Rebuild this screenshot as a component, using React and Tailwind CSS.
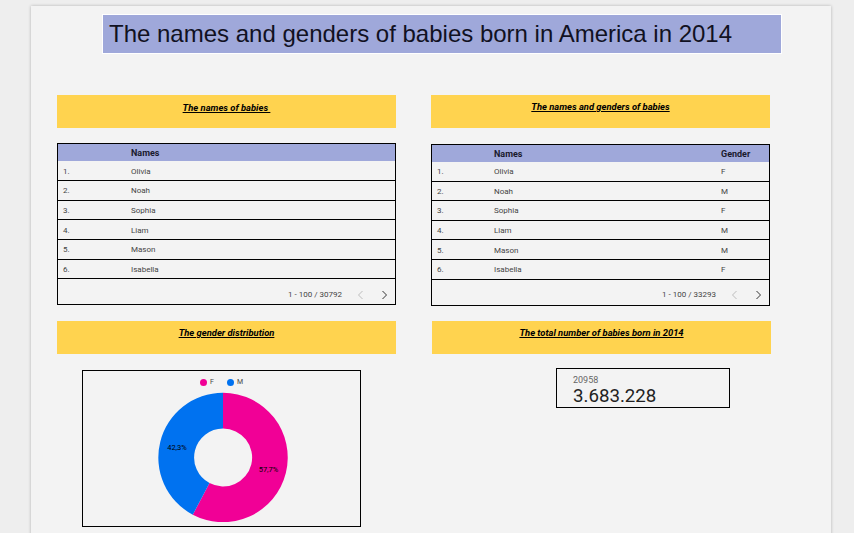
import React from 'react';

const names = [
  ['Olivia', 'F'],
  ['Noah', 'M'],
  ['Sophia', 'F'],
  ['Liam', 'M'],
  ['Mason', 'M'],
  ['Isabella', 'F'],
];

function SectionHeader({ title, className = '' }) {
  return (
    <div className={`h-[33px] w-[339px] bg-[#ffd34f] text-center font-['Roboto',sans-serif] text-[9.4px] font-bold italic leading-[11px] text-black ${className}`}>
      <span className="whitespace-pre underline">{title}</span>
    </div>
  );
}

function Pager({ label }) {
  return (
    <div className="flex flex-1 items-center justify-end pt-[6px] font-['Roboto',sans-serif] text-[8px] text-[#444]">
      <span>{label}</span>
      <svg className="ml-[15px]" width="7" height="10" viewBox="0 0 7 10" fill="none" stroke="#bdbdbd" strokeWidth="1">
        <path d="M5.5 1 L1.5 5 L5.5 9" />
      </svg>
      <svg className="ml-[17px] mr-[7px]" width="7" height="10" viewBox="0 0 7 10" fill="none" stroke="#333" strokeWidth="1">
        <path d="M1.5 1 L5.5 5 L1.5 9" />
      </svg>
    </div>
  );
}

function NamesTable({ showGender, total, className = '' }) {
  return (
    <div className={`flex h-[162px] w-[339px] flex-col border border-black font-['Roboto',sans-serif] text-[8px] text-[#444] ${className}`}>
      <div className={`flex items-center bg-[#9fa8da] pt-[2px] text-[9px] font-bold text-[#1a1a2e] ${showGender ? 'h-[16.9px]' : 'h-[17.4px]'}`}>
        <span className={showGender ? 'w-[62px]' : 'w-[73px]'} />
        <span className={showGender ? 'w-[227px]' : ''}>Names</span>
        {showGender && <span>Gender</span>}
      </div>
      {names.map(([name, gender], i) => (
        <div key={name} className="flex h-[19.65px] items-center border-b border-black pt-[2px]">
          <span className={`pl-[5px] ${showGender ? 'w-[62px]' : 'w-[73px]'}`}>{i + 1}.</span>
          <span className={showGender ? 'w-[227px]' : ''}>{name}</span>
          {showGender && <span>{gender}</span>}
        </div>
      ))}
      <Pager label={total} />
    </div>
  );
}

function GenderChart() {
  return (
    <div className="ml-[25px] mt-[16px] flex h-[157px] w-[279px] flex-col items-center border border-black font-['Roboto',sans-serif]">
      <div className="mt-[7px] flex h-[9px] items-center text-[7px] text-[#444]">
        <span className="h-[7px] w-[7px] rounded-full bg-[#f10096]" />
        <span className="ml-[3px] w-[17px]">F</span>
        <span className="h-[7px] w-[7px] rounded-full bg-[#0072f0]" />
        <span className="ml-[3px]">M</span>
      </div>
      <svg className="ml-[2px] mt-[5px]" width="130" height="130" viewBox="-65 -65.5 130 130">
        <path
          d="M0 -64.7 A64.7 64.7 0 1 1 -30.2 57.2 L-13.5 25.6 A29 29 0 1 0 0 -29 Z"
          fill="#f10096"
        />
        <path
          d="M0 -64.7 A64.7 64.7 0 0 0 -30.2 57.2 L-13.5 25.6 A29 29 0 0 1 0 -29 Z"
          fill="#0072f0"
        />
        <text x="-46" y="-8" textAnchor="middle" fontSize="7.5" fill="#000">42,3%</text>
        <text x="45.5" y="14" textAnchor="middle" fontSize="7.5" fill="#000">57,7%</text>
      </svg>
    </div>
  );
}

export default function App() {
  return (
    <div className="h-screen overflow-hidden bg-[#eeeeee]">
      <div className="ml-[31px] mt-[6px] h-[600px] w-[800px] bg-[#f3f3f3] pt-[8px] shadow-[0_0_3px_rgba(0,0,0,0.25)]">
        <div className="ml-[71px] flex h-[40px] w-[680px] items-center border border-white bg-[#9fa8da] pl-[6px] font-['Liberation_Sans',Arial,sans-serif] text-[24px] text-[#111122]">
          The names and genders of babies born in America in 2014
        </div>

        <div className="ml-[26px] mt-[41px] flex gap-[35px]">
          <div className="w-[339px]">
            <SectionHeader title="The names of babies " className="pt-[7px]" />
            <NamesTable total="1 - 100 / 30792" className="mt-[15px]" />
            <SectionHeader title="The gender distribution" className="mt-[16px] pt-[6px]" />
            <GenderChart />
          </div>

          <div className="w-[340px]">
            <SectionHeader title="The names and genders of babies" className="pt-[6px]" />
            <NamesTable showGender total="1 - 100 / 33293" className="mt-[16px]" />
            <SectionHeader title="The total number of babies born in 2014" className="ml-[1px] mt-[15px] pt-[6px]" />
            <div className="ml-[125px] mt-[14px] h-[40px] w-[174px] border border-black pl-[16px] pt-[6px] font-['Roboto',sans-serif]">
              <div className="text-[9px] leading-[10px] text-[#666]">20958</div>
              <div className="text-[18.7px] leading-[22px] text-[#222]">3.683.228</div>
            </div>
          </div>
        </div>
      </div>
    </div>
  );
}
